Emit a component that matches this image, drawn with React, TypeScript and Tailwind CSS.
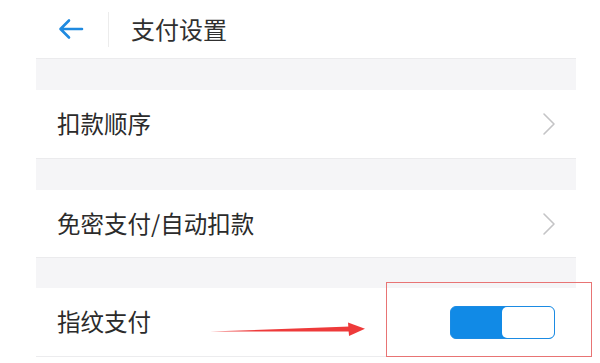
import React from "react";

const Chevron = () => (
  <svg width="14" height="24" viewBox="0 0 14 24" className="mr-[44px]">
    <path d="M2 2 L12 12 L2 22" fill="none" stroke="#c4c4c6" strokeWidth="1.6" strokeLinecap="round" strokeLinejoin="round" />
  </svg>
);

const Gap = ({ h }: { h: string }) => (
  <div className={`ml-[36px] w-[540px] ${h} bg-[#f5f5f7] border-t border-[#ebebed]`} />
);

export default function App() {
  return (
    <div
      className="relative w-[600px] h-[363px] bg-white overflow-hidden text-[#2b2b2b]"
      style={{ fontFamily: '"Noto Sans CJK SC", "Noto Sans", sans-serif' }}
    >
      <div className="h-[58px] flex items-center">
        <div className="pl-[58px] w-[108px] flex items-center">
          <svg width="26" height="22" viewBox="0 0 26 22">
            <path d="M24 11 H3 M11 2.5 L2.5 11 L11 19.5" fill="none" stroke="#1f8ae0" strokeWidth="2.6" strokeLinecap="round" strokeLinejoin="round" />
          </svg>
        </div>
        <div className="w-px h-[35px] bg-[#ececec]" />
        <div className="pl-[22px] text-[24px] leading-none text-[#303030]">支付设置</div>
      </div>
      <Gap h="h-[32px]" />
      <div className="h-[68px] flex items-center justify-between">
        <span className="pl-[57px] text-[23.5px] leading-none">扣款顺序</span>
        <Chevron />
      </div>
      <Gap h="h-[32px]" />
      <div className="h-[67px] flex items-center justify-between">
        <span className="pl-[57px] text-[23.5px] leading-none">免密支付/自动扣款</span>
        <Chevron />
      </div>
      <Gap h="h-[31px]" />
      <div className="h-[68px] flex items-center justify-between">
        <span className="pl-[57px] text-[23.5px] leading-none">指纹支付</span>
        <div className="mr-[45px] w-[105px] h-[33px] rounded-[6px] border-[1.5px] border-[#1b8be3] bg-[#118ae6] flex justify-end">
          <div className="w-[52px] h-full rounded-[5px] bg-white" />
        </div>
      </div>
      <div className="ml-[36px] w-[540px] h-px bg-[#ececee]" />

      <svg className="absolute left-[205px] top-[318px]" width="165" height="22" viewBox="0 0 165 22">
        <path d="M5 13.6 L145 8.5 L145 13.5 Z" fill="#ee3a3a" />
        <path d="M143 4.5 L160 10.8 L144 18 Z" fill="#ee3a3a" />
      </svg>
      <div className="absolute left-[386px] top-[282px] w-[206px] h-[75px] border-[1.5px] border-[#e87474]" />
    </div>
  );
}
